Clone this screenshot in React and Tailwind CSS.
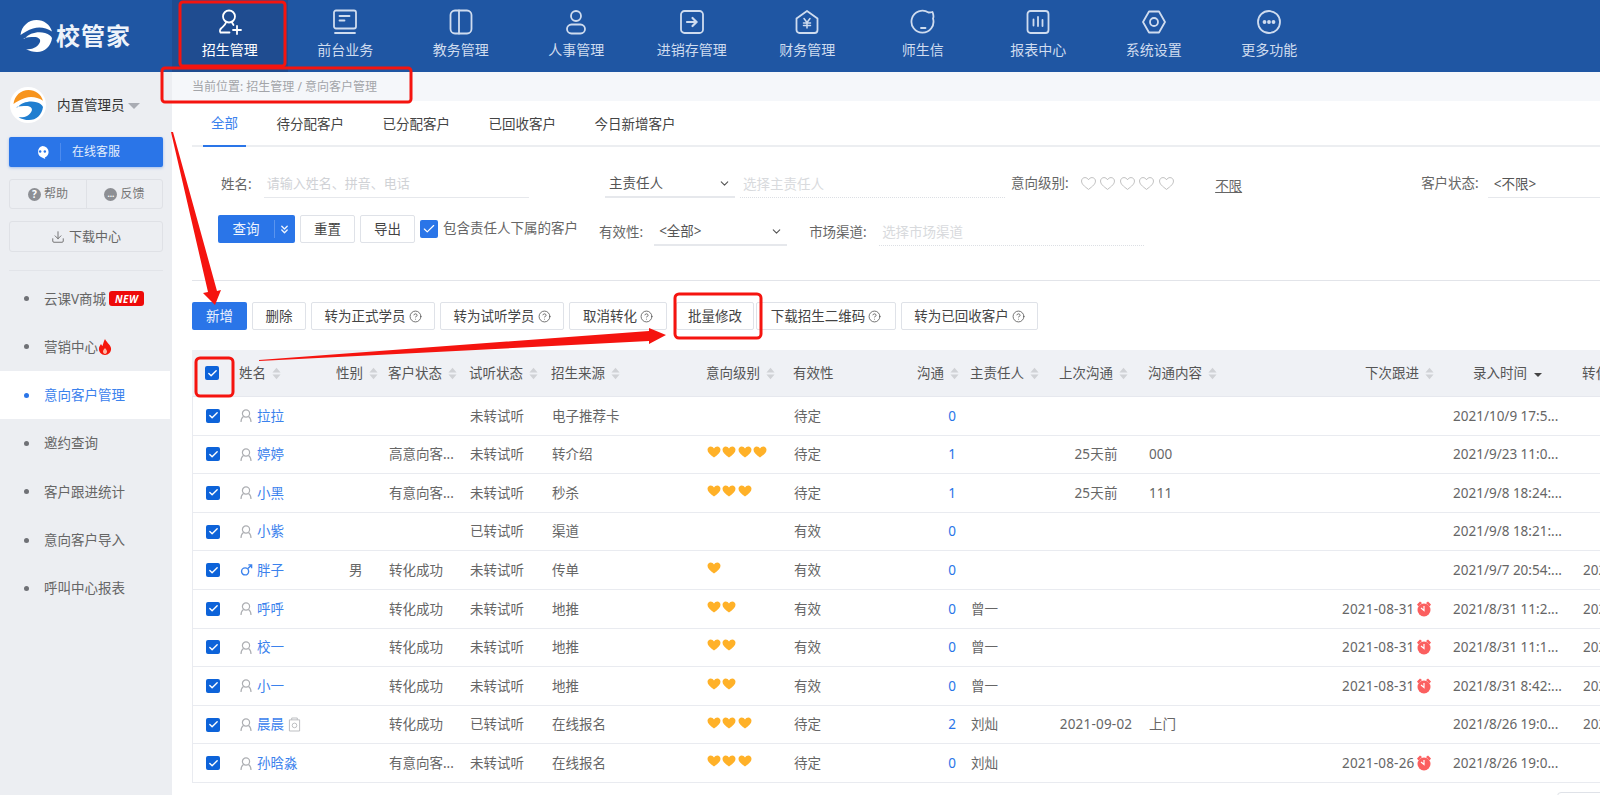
import React from 'react';
import { ChevronDown, ChevronsDown, CircleHelp, Download, Check } from 'lucide-react';

const FONT = 'font-["Noto_Sans","Noto_Sans_CJK_SC",sans-serif]';

// Swoosh logo, used white in the header and coloured in the sidebar avatar
const LogoMark = ({ top = '#fff', bottom = '#fff', className = '' }) => (
    <svg viewBox="0 0 32 32" className={className}>
        <path d="M0.500 15C1.500 6 8.500 0 16.500 0 24 0 30 4.500 32 11.500 26 7.500 19 6.500 13 8.500 8 10 4 12.500.5 15z" fill={top} />
        <path d="M5 18.500C9 13 18 11 25 13c4 1 6 3 7 5-1 8-7 14-15 14-4 0-8-1-11-3 6 1 12-2 14-7 1-3-2-5-6-5-3 0-8 0-11 1.500z" fill={bottom} />
    </svg>
);

const navIcons = {
    enroll: (
        <>
            <circle cx="12" cy="7.500" r="6" />
            <path d="M9 13.500c-1 3-3 4-5 6-1 1-1.500 3-.5 4h9" />
            <path d="M15 13.500l1.500 2.500M20 17v8M16 21h8" />
        </>
    ),
    front: (
        <>
            <rect x="2" y="1.500" width="22" height="18" rx="2" />
            <path d="M7.500 7h10M7.500 11.500h5M3 24h20" />
        </>
    ),
    academic: (
        <>
            <rect x="2.500" y="1.500" width="21" height="23" rx="4.500" />
            <path d="M11 1.500v23" />
        </>
    ),
    staff: (
        <>
            <circle cx="13" cy="7" r="5" />
            <rect x="4" y="15.500" width="18" height="9" rx="4.500" />
        </>
    ),
    stock: (
        <>
            <rect x="2" y="2" width="22" height="22" rx="3.500" />
            <path d="M8 13h9.500M13.500 9l4 4-4 4" strokeWidth="2.200" />
        </>
    ),
    finance: (
        <>
            <path d="M13 2L23.500 9.500V21a3 3 0 0 1-3 3H5.500a3 3 0 0 1-3-3V9.500z" strokeLinejoin="round" />
            <path d="M10 9.500l3 4 3-4M13 13.500v5.500M9.500 14h7M9.500 16.500h7" strokeWidth="1.500" />
        </>
    ),
    message: (
        <>
            <path d="M18.500 3.500A11 11 0 1 0 23 9.500c1-2 .5-4-.5-6.500-1.500.5-3 .5-4 .5z" strokeLinejoin="round" />
            <path d="M11 19h4.500" />
        </>
    ),
    report: (
        <>
            <rect x="2.500" y="2" width="21" height="22" rx="3" />
            <path d="M8.500 10.500v6M13 8v9M17.500 11v6" />
        </>
    ),
    settings: (
        <>
            <path d="M8 2.500h10L24 13l-6 10.500H8L2 13z" strokeLinejoin="round" />
            <circle cx="13" cy="13" r="4" />
        </>
    ),
    more: (
        <>
            <circle cx="13" cy="13" r="11" />
            <circle cx="8.500" cy="13" r="1" fill="currentColor" />
            <circle cx="13" cy="13" r="1" fill="currentColor" />
            <circle cx="17.500" cy="13" r="1" fill="currentColor" />
        </>
    ),
};

const navItems = [
    ['招生管理', 'enroll'],
    ['前台业务', 'front'],
    ['教务管理', 'academic'],
    ['人事管理', 'staff'],
    ['进销存管理', 'stock'],
    ['财务管理', 'finance'],
    ['师生信', 'message'],
    ['报表中心', 'report'],
    ['系统设置', 'settings'],
    ['更多功能', 'more'],
];

const Header = () => (
    <div className="flex h-[72px] bg-[#1f56a3]">
        <div className="flex w-[172px] items-center pl-5">
            <LogoMark className="h-[32px] w-[32px]" />
            <span className="ml-[4px] text-[24px] font-bold leading-none tracking-[1px] text-[#eef3fa]">校管家</span>
        </div>
        {navItems.map(([label, icon], i) => (
            <div
                key={label}
                className={`flex w-[115.500px] flex-col items-center pt-[9px] ${i === 0 ? 'bg-[#1f4c90] text-white' : 'text-[#cfdcef]'}`}
            >
                <svg viewBox="0 0 26 26" fill="none" stroke="currentColor" strokeWidth="1.800" strokeLinecap="round" className="h-[26px] w-[26px]">
                    {navIcons[icon]}
                </svg>
                <span className="mt-[4px] text-[14px] leading-[22px]">{label}</span>
            </div>
        ))}
    </div>
);

const sideItems = ['云课V商城', '营销中心', '意向客户管理', '邀约查询', '客户跟进统计', '意向客户导入', '呼叫中心报表'];

const Flame = () => (
    <svg viewBox="0 0 14 16" className="h-[16px] w-[14px]">
        <path d="M7 0c1 3 5 5 6 9 .6 4-2.500 7-6 7s-6.500-3-6-7c.3-2 1.500-3 2-4 .5 1 1 1.500 1.500 2C5 5 5.500 3 7 0z" fill="#f5170b" />
        <path d="M7 9c.5 1 2 2 2 3.500S8 15 7 15s-2-1-2-2.500S6.500 10 7 9z" fill="#ffb9a8" />
    </svg>
);

const Sidebar = () => (
    <div className="flex h-[723px] w-[172px] shrink-0 flex-col bg-[#eceef2] pt-[15px]">
        <div className="flex h-[36px] items-center pl-[10px]">
            <div className="flex h-[36px] w-[36px] items-center justify-center rounded-full bg-white">
                <LogoMark top="#f7941d" bottom="#1f7ed0" className="h-[30px] w-[30px]" />
            </div>
            <span className="ml-[11px] mt-[1px] text-[13.500px] text-[#333]">内置管理员</span>
            <span className="ml-[3px] mt-[2px] border-x-[6px] border-t-[6px] border-x-transparent border-t-[#a9acb3]" />
        </div>
        <div className="mx-[9px] mt-[14px] flex h-[30px] items-center rounded-[2px] bg-[#2a75e8] text-[12px] text-[#e4eefc] shadow-[0_1px_3px_rgba(42,117,232,0.4)]">
            <svg viewBox="0 0 16 16" className="ml-[26px] h-[15px] w-[15px]">
                <path d="M8 1a6.500 6.500 0 0 1 6.500 6.500c0 3-2 5-4 5.800l.5 1.700-3-1.500A6.500 6.500 0 0 1 8 1z" fill="#fff" />
                <circle cx="5.500" cy="7" r="1.300" fill="#2a75e8" />
                <circle cx="10.500" cy="7" r="1.300" fill="#2a75e8" />
            </svg>
            <span className="ml-[10px] h-[18px] w-px bg-[#4d8bee]" />
            <span className="ml-[11px]">在线客服</span>
        </div>
        <div className="mx-[9px] mt-[12px] flex h-[30px] items-center rounded-[3px] border border-[#dfe1e6] text-[12px] text-[#777]">
            <div className="flex h-full w-[77px] items-center justify-center gap-[3px] border-r border-[#dfe1e6]">
                <span className="flex h-[13px] w-[13px] items-center justify-center rounded-full bg-[#8d8f94] text-[10px] font-bold leading-none text-white">?</span>
                帮助
            </div>
            <div className="flex h-full flex-1 items-center justify-center gap-[3px]">
                <span className="flex h-[13px] w-[13px] items-center justify-center rounded-full bg-[#8d8f94] text-[8px] font-bold leading-none text-white">…</span>
                反馈
            </div>
        </div>
        <div className="mx-[9px] mt-[12px] flex h-[31px] items-center justify-center gap-[4px] rounded-[3px] border border-[#dfe1e6] text-[13px] text-[#666]">
            <Download size={14} strokeWidth={1.500} />
            下载中心
        </div>
        <div className="mx-[9px] mt-[18px] h-px bg-[#e2e4e9]" />
        <div className="mt-[3.500px]">
            {sideItems.map((item, i) => (
                <div key={item} className={`flex h-[48.300px] w-[170px] items-center pl-[24px] text-[13.500px] ${i === 2 ? 'bg-white text-[#3b82ed]' : 'text-[#666]'}`}>
                    <span className={`mr-[15px] h-[5px] w-[5px] rounded-full ${i === 2 ? 'bg-[#2a75e8]' : 'bg-[#6f7176]'}`} />
                    {item}
                    {i === 0 && (
                        <span className="ml-[3px] flex h-[15px] w-[35px] items-center justify-center rounded-[3px] bg-[#ee0a0a] text-[10px] font-bold italic leading-none tracking-[0.500px] text-white">NEW</span>
                    )}
                    {i === 1 && <Flame />}
                </div>
            ))}
        </div>
    </div>
);

const Hearts = ({ n, empty }) => (
    <span className="flex">
        {Array.from({ length: n }).map((_, i) => (
            <svg key={i} viewBox="0 0 14 12" className={empty ? 'mr-[4.500px] h-[13px] w-[15px]' : 'mr-[1.300px] h-[12px] w-[14px]'}>
                <path
                    d="M7 11.500C3 8.500.5 6.500.5 3.700.5 1.800 2 .5 3.700.5 5 .5 6.300 1.200 7 2.500 7.700 1.200 9 .5 10.300.5 12 .5 13.500 1.800 13.500 3.700c0 2.800-2.500 4.800-6.500 7.800z"
                    fill={empty ? 'none' : '#ffb128'}
                    stroke={empty ? '#b5b5b5' : 'none'}
                    strokeWidth="0.800"
                />
            </svg>
        ))}
    </span>
);

const Btn = ({ children, className = '', help }) => (
    <div className={`flex h-[28px] items-center justify-center gap-[3px] rounded-[2px] border border-[#dfe2e8] bg-white text-[13.500px] text-[#444] ${className}`}>
        {children}
        {help && <CircleHelp size={13} strokeWidth={1.500} className="text-[#555]" />}
    </div>
);

const Filters = () => (
    <div className="h-[134px] border-b border-[#e2e4e9] pl-[26px] text-[13.500px] text-[#666]">
        <div className="flex h-[56px] items-end pb-[5px]">
            <div className="flex h-[27px] w-[311px] items-center">
                <span className="ml-[3px] w-[43px]">姓名:</span>
                <span className="flex h-full w-[266px] items-center border-b border-[#e6e8ec] pl-[3px] text-[13px] text-[#d0d2d6]">请输入姓名、拼音、电话</span>
            </div>
            <div className="ml-[76px] flex h-[27px] w-[130px] items-center justify-between border-b-2 border-[#e6e8ec] pl-[4px] pr-[4px] text-[#555]">
                主责任人
                <ChevronDown size={13} />
            </div>
            <span className="ml-[5px] flex h-[27px] w-[265px] items-center border-b border-dotted border-[#dcdfe4] pl-[3px] text-[#d8dadd]">选择主责任人</span>
            <span className="ml-[6px] self-center pt-[21px]">意向级别:</span>
            <span className="ml-[12px] self-center pt-[21px]"><Hearts n={5} empty /></span>
            <span className="ml-[37px] self-center pt-[27px] text-[#666] underline">不限</span>
            <span className="ml-[179px] self-center pt-[21px]">客户状态:</span>
            <span className="ml-[9px] flex h-[27px] flex-1 items-center border-b border-[#e6e8ec] pl-[6px] text-[#555]">&lt;不限&gt;</span>
        </div>
        <div className="mt-[12px] flex">
            <div className="flex h-[28px] w-[77px] items-center rounded-[2px] bg-[#2a75e8] text-[#eef4fe]">
                <span className="w-[56px] text-center">查询</span>
                <span className="h-[18px] w-px bg-[#5a94ee]" />
                <ChevronsDown size={13} strokeWidth={2.500} className="ml-[3px]" />
            </div>
            <Btn className="ml-[5px] w-[55px]">重置</Btn>
            <Btn className="ml-[5px] w-[55px]">导出</Btn>
            <div className="ml-[5px] mt-[5px] flex h-[18px] w-[18px] items-center justify-center rounded-[2px] bg-[#2a75e8]">
                <Check size={14} strokeWidth={2} className="text-white" />
            </div>
            <span className="ml-[5px] mt-[3px] text-[13.500px]">包含责任人下属的客户</span>
            <div className="ml-[21px] mt-[4px] flex h-[27px] items-center">有效性:</div>
            <div className="ml-[11px] mt-[4px] flex h-[27px] w-[133px] items-center justify-between border-b-2 border-[#e6e8ec] pl-[5px] pr-[4px] text-[#555]">
                &lt;全部&gt;
                <ChevronDown size={13} />
            </div>
            <div className="ml-[22px] mt-[4px] flex h-[27px] w-[70px] items-center whitespace-nowrap">市场渠道:</div>
            <span className="mt-[4px] flex h-[27px] w-[265px] items-center border-b border-dotted border-[#dcdfe4] pl-[3px] text-[#d8dadd]">选择市场渠道</span>
        </div>
    </div>
);

const Toolbar = () => (
    <div className="mt-[21px] flex gap-[5px]">
        <div className="flex h-[28px] w-[55px] items-center justify-center rounded-[2px] bg-[#2a75e8] text-[13.500px] text-[#eef4fe]">新增</div>
        <Btn className="w-[54px]">删除</Btn>
        <Btn className="w-[124px]" help>转为正式学员</Btn>
        <Btn className="w-[124px]" help>转为试听学员</Btn>
        <Btn className="w-[98px]" help>取消转化</Btn>
        <Btn className="ml-[4px] w-[78px]">批量修改</Btn>
        <Btn className="ml-[-3px] w-[140px]" help>下载招生二维码</Btn>
        <Btn className="w-[137px]" help>转为已回收客户</Btn>
    </div>
);

const Sort = () => (
    <svg viewBox="0 0 10 14" className="ml-[6px] h-[13px] w-[9px] shrink-0">
        <path d="M5 .5l4.500 5.500h-9zM5 13.500L.5 8h9z" fill="#d0d2d6" />
    </svg>
);

const columns = 'grid grid-cols-[47px_97px_52px_81px_82px_155px_87px_112px_65px_87px_91px_179px_125px_130px_100px]';

const heads = [
    ['姓名', 'pl-0', true], ['性别', 'pl-0', true], ['客户状态', 'pl-0', true], ['试听状态', 'pl-0', true],
    ['招生来源', 'pl-0', true], ['意向级别', 'pl-0', true], ['有效性', 'pl-0', false], ['沟通', 'pl-[12px]', true],
    ['主责任人', 'pl-0', true], ['上次沟通', 'pl-[2px]', true], ['沟通内容', 'pl-0', true], ['下次跟进', 'pl-[38px]', true],
];

const rows = [
    { name: '拉拉', trial: '未转试听', source: '电子推荐卡', hearts: 0, valid: '待定', comm: 0, created: '2021/10/9 17:5...' },
    { name: '婷婷', status: '高意向客...', trial: '未转试听', source: '转介绍', hearts: 4, valid: '待定', comm: 1, last: '25天前', content: '000', created: '2021/9/23 11:0...' },
    { name: '小黑', status: '有意向客...', trial: '未转试听', source: '秒杀', hearts: 3, valid: '待定', comm: 1, last: '25天前', content: '111', created: '2021/9/8 18:24:...' },
    { name: '小紫', trial: '已转试听', source: '渠道', hearts: 0, valid: '有效', comm: 0, created: '2021/9/8 18:21:...' },
    { name: '胖子', male: true, gender: '男', status: '转化成功', trial: '未转试听', source: '传单', hearts: 1, valid: '有效', comm: 0, created: '2021/9/7 20:54:...', conv: '2021' },
    { name: '呼呼', status: '转化成功', trial: '未转试听', source: '地推', hearts: 2, valid: '有效', comm: 0, owner: '曾一', next: '2021-08-31', created: '2021/8/31 11:2...', conv: '2021' },
    { name: '校一', status: '转化成功', trial: '未转试听', source: '地推', hearts: 2, valid: '有效', comm: 0, owner: '曾一', next: '2021-08-31', created: '2021/8/31 11:1...', conv: '2021' },
    { name: '小一', status: '转化成功', trial: '未转试听', source: '地推', hearts: 2, valid: '有效', comm: 0, owner: '曾一', next: '2021-08-31', created: '2021/8/31 8:42:...', conv: '2021' },
    { name: '晨晨', doc: true, status: '转化成功', trial: '已转试听', source: '在线报名', hearts: 3, valid: '待定', comm: 2, owner: '刘灿', last: '2021-09-02', content: '上门', created: '2021/8/26 19:0...', conv: '2021' },
    { name: '孙晗淼', status: '有意向客...', trial: '未转试听', source: '在线报名', hearts: 3, valid: '待定', comm: 0, owner: '刘灿', next: '2021-08-26', created: '2021/8/26 19:0...' },
];

const RowCheck = () => (
    <span className="ml-[13px] flex h-[14px] w-[14px] items-center justify-center rounded-[2px] bg-[#0d63d9]">
        <Check size={11} strokeWidth={3} className="text-white" />
    </span>
);

const PersonIcon = () => (
    <svg viewBox="0 0 14 14" fill="none" stroke="#adafb3" strokeWidth="1.200" className="ml-[-1px] mr-[4px] h-[15px] w-[14px] shrink-0">
        <circle cx="7" cy="5" r="3.600" />
        <path d="M4.500 8c-1.500 1-2.500 3-2.500 5.500M9.500 8c1.500 1 2.500 3 2.500 5.500" />
    </svg>
);

const MaleIcon = () => (
    <svg viewBox="0 0 14 14" fill="none" stroke="#3b82ed" strokeWidth="1.500" className="mr-[4px] h-[14px] w-[13px] shrink-0">
        <circle cx="5.500" cy="8.500" r="3.800" />
        <path d="M8.500 5.500L12.500 1.500M9 1.500h3.500V5" />
    </svg>
);

const DocIcon = () => (
    <svg viewBox="0 0 14 16" fill="none" stroke="#b8babd" strokeWidth="1" className="ml-[4px] h-[15px] w-[13px]">
        <path d="M1.500 3h11v12h-11zM4 3V1h6v2" />
        <circle cx="7" cy="9" r="2.500" />
    </svg>
);

const Clock = () => (
    <svg viewBox="0 0 16 16" className="ml-[2px] h-[16px] w-[16px] shrink-0">
        <path d="M1 3.500L4 .5l2 1.500-3.500 3.500zM15 3.500L12 .5l-2 1.500 3.500 3.500z" fill="#fb5f5f" />
        <circle cx="8" cy="9" r="6.500" fill="#fb5f5f" />
        <path d="M8 5v4.500L5 7" fill="none" stroke="#fff" strokeWidth="1.200" />
    </svg>
);

const Table = () => (
    <div className="mt-[20px] w-[1490px] text-[13.500px] text-[#666]">
        <div className={`${columns} h-[47px] items-center border-b border-[#e6e8ee] bg-[#eff1f5] text-[#555]`}>
            <RowCheck />
            {heads.map(([label, pad, sort]) => (
                <div key={label} className={`flex items-center ${pad}`}>
                    {label}
                    {sort && <Sort />}
                </div>
            ))}
            <div className="flex items-center pl-[21px]">
                录入时间
                <span className="ml-[7px] mt-[3px] border-x-[4px] border-t-[4px] border-x-transparent border-t-[#444]" />
            </div>
            <div>转化时间</div>
        </div>
        {rows.map((r) => (
            <div key={r.name} className={`${columns} h-[38.600px] items-center border-b border-l border-[#e9ebf0]`}>
                <RowCheck />
                <div className="flex items-center text-[#3b82ed]">
                    {r.male ? <MaleIcon /> : <PersonIcon />}
                    {r.name}
                    {r.doc && <DocIcon />}
                </div>
                <div className="pl-[12px]">{r.gender}</div>
                <div className="whitespace-nowrap">{r.status}</div>
                <div>{r.trial}</div>
                <div>{r.source}</div>
                <div className="mb-[4px]"><Hearts n={r.hearts} /></div>
                <div>{r.valid}</div>
                <div className="pr-[15px] text-right text-[#2a75e8]">{r.comm}</div>
                <div>{r.owner}</div>
                <div className="pr-[15px] text-center tracking-[0.200px]">{r.last}</div>
                <div>{r.content}</div>
                <div className="flex items-center pl-[14px] tracking-[0.200px]">
                    {r.next}
                    {r.next && <Clock />}
                </div>
                <div className="whitespace-nowrap">{r.created}</div>
                <div>{r.conv}</div>
            </div>
        ))}
    </div>
);

// Red marks drawn over the screenshot
const Annotations = () => (
    <svg className="pointer-events-none absolute left-0 top-0 h-[795px] w-[1600px]" viewBox="0 0 1600 795">
        <g fill="none" stroke="#f5140f" strokeWidth="3">
            <rect x="180" y="2" width="105" height="64" rx="3" />
            <rect x="162" y="68" width="249" height="34" rx="3" />
            <rect x="196" y="358" width="37" height="38" rx="4" />
            <rect x="675" y="294" width="86" height="44" rx="4" />
        </g>
        <g fill="#f5140f">
            <polygon points="171,132 173,132 217,291 221,290 215,305 203,293 208,292" />
            <polygon points="259,360 649,331 649,328 666,335 649,344 649,341 259,361" />
        </g>
    </svg>
);

const App = () => {
    return (
        <div className={`relative h-[795px] w-[1600px] overflow-hidden bg-white ${FONT}`}>
            <Header />
            <div className="flex">
                <Sidebar />
                <div className="min-w-0 flex-1">
                    <div className="flex h-[29px] items-center bg-[#f5f7fa] pl-[20px] text-[12px] text-[#a3a5a9]">
                        当前位置: 招生管理 / 意向客户管理
                    </div>
                    <div className="ml-[20px]">
                        <div className="flex h-[46px] gap-[22.500px] border-b-2 border-[#eceef1] pl-[11px] text-[13.500px] text-[#444]">
                            {['全部', '待分配客户', '已分配客户', '已回收客户', '今日新增客户'].map((tab, i) => (
                                <div key={tab} className={`flex h-[46px] items-center px-2 ${i === 0 ? 'border-b-2 border-[#2a75e8] text-[#3b82ed]' : ''}`}>
                                    {tab}
                                </div>
                            ))}
                        </div>
                        <Filters />
                        <Toolbar />
                        <Table />
                        <div className="ml-[1365px] mt-[9px] h-[28px] w-[60px] rounded-[4px] border border-[#dfe2e8]" />
                    </div>
                </div>
            </div>
            <Annotations />
        </div>
    );
};

export default App;
